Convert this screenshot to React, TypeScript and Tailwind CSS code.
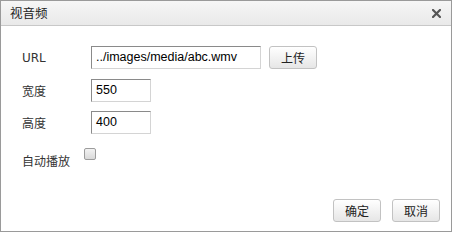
import React from "react";

const latin = "font-['Tahoma','DejaVu_Sans','Liberation_Sans','Noto_Sans_CJK_SC',sans-serif]";

function Btn({ children }: { children: React.ReactNode }) {
  return (
    <button className="w-[48px] h-[23px] rounded-[3px] border border-[#c2c2c2] bg-gradient-to-b from-[#ffffff] to-[#e6e6e6] text-[12px] text-[#222] leading-none font-['Noto_Sans_CJK_SC',sans-serif] flex items-center justify-center">
      {children}
    </button>
  );
}

function Field({ value, w }: { value: string; w: string }) {
  return (
    <div
      className={`${w} h-[23px] border border-t-[#8a8a8a] border-l-[#8a8a8a] border-r-[#d4d4d4] border-b-[#d4d4d4] bg-white px-[4px] flex items-center text-[12.5px] text-black font-['Liberation_Sans','Noto_Sans_CJK_SC',sans-serif] leading-none`}
    >
      {value}
    </div>
  );
}

export default function App() {
  return (
    <div className="w-[452px] h-[232px] border border-[#9a9a9a] bg-white flex flex-col font-['Noto_Sans_CJK_SC',sans-serif] text-[12px] text-[#333]">
      <div className="h-[25px] shrink-0 border-b border-[#c8c8c8] bg-gradient-to-b from-[#f6f6f6] to-[#e9e9e9] flex items-center justify-between pl-[9px] pr-[10px]">
        <span className="text-[12.5px] text-[#222] leading-none">视音频</span>
        <svg width="9" height="9" viewBox="0 0 9 9" className="mt-[1px]">
          <path d="M1 1 L8 8 M8 1 L1 8" stroke="#555" strokeWidth="2.2" strokeLinecap="square" />
        </svg>
      </div>
      <div className="flex-1 flex flex-col pl-[21px] pr-[11px]">
        <div className="mt-[20px] flex items-center h-[23px]">
          <span className={`w-[69px] ${latin} text-[12px] text-[#333]`}>URL</span>
          <Field value="../images/media/abc.wmv" w="w-[170px]" />
          <div className="ml-[8px]">
            <Btn>上传</Btn>
          </div>
        </div>
        <div className="mt-[10px] flex items-center h-[23px]">
          <span className="w-[69px]">宽度</span>
          <Field value="550" w="w-[60px]" />
        </div>
        <div className="mt-[9px] flex items-center h-[23px]">
          <span className="w-[69px]">高度</span>
          <Field value="400" w="w-[60px]" />
        </div>
        <div className="mt-[14px] flex items-start">
          <span className="w-[62px] mt-[4px]">自动播放</span>
          <span className="w-[12px] h-[12px] rounded-[2px] border border-[#9c9c9c] bg-gradient-to-b from-[#f2f2f2] to-[#d9d9d9]" />
        </div>
        <div className="mt-auto mb-[9px] flex justify-end gap-[11px]">
          <Btn>确定</Btn>
          <Btn>取消</Btn>
        </div>
      </div>
    </div>
  );
}
